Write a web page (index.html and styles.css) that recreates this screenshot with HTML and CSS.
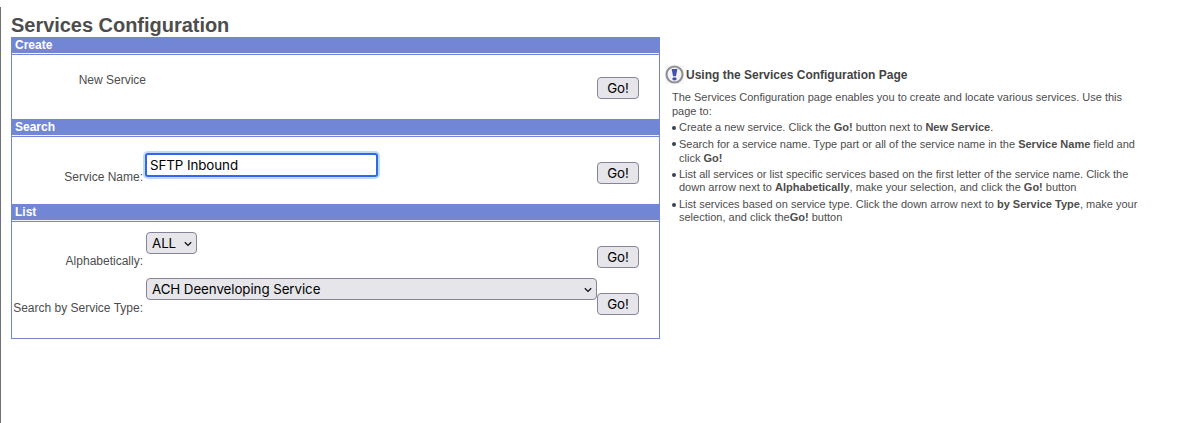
FILE: index.html
```html
<!DOCTYPE html>
<html lang="en">
<head>
<meta charset="utf-8">
<title>Services Configuration</title>
<link rel="stylesheet" href="styles.css">
</head>
<body>
<div class="page">
  <main class="main">
    <h1 class="title"><span>Services Configuration</span></h1>
    <div class="panel">
      <h2 class="bar"><span>Create</span></h2>
      <div class="section create">
        <div class="row">
          <span class="label new"><span>New Service</span></span>
          <span class="control"></span>
          <button class="go">Go!</button>
        </div>
      </div>
      <h2 class="bar"><span>Search</span></h2>
      <div class="section search">
        <div class="row">
          <label class="label" for="name"><span>Service Name:</span></label>
          <span class="control"><input class="field" id="name" type="text" value="SFTP Inbound"></span>
          <button class="go">Go!</button>
        </div>
      </div>
      <h2 class="bar"><span>List</span></h2>
      <div class="section list">
        <div class="row alpha">
          <label class="label" for="letter"><span>Alphabetically:</span></label>
          <span class="control"><span class="select small"><select id="letter"><option>ALL</option></select><svg class="chevron" viewBox="0 0 8 6"><path d="M.8 1.2 4 4.4 7.2 1.2"/></svg></span></span>
          <button class="go">Go!</button>
        </div>
        <div class="row type">
          <label class="label" for="type"><span>Search by Service Type:</span></label>
          <span class="control"><span class="select wide"><select id="type"><option>ACH Deenveloping Service</option></select><svg class="chevron" viewBox="0 0 8 6"><path d="M.8 1.2 4 4.4 7.2 1.2"/></svg></span></span>
          <button class="go">Go!</button>
        </div>
      </div>
    </div>
  </main>
  <aside class="help">
    <div class="help-head">
      <svg class="info" viewBox="0 0 20 20"><rect x="0" y="0" width="19" height="19" fill="#f6f6f8"/><circle cx="9.5" cy="9.5" r="8" fill="#f4f4f8" stroke="#939397" stroke-width="2.2"/><path d="M6.6 4h5.8l-1.5 7.2H8.1z" fill="#4350ad"/><ellipse cx="9.5" cy="13.8" rx="2.2" ry="1.6" fill="#4350ad"/></svg>
      <h2 class="help-title">Using the Services Configuration Page</h2>
    </div>
    <p class="intro">The Services Configuration page enables you to create and locate various services. Use this<br>page to:</p>
    <ul class="tips">
      <li>Create a new service. Click the <b>Go!</b> button next to <b>New Service</b>.</li>
      <li class="loose">Search for a service name. Type part or all of the service name in the <b>Service Name</b> field and<br>click <b>Go!</b></li>
      <li>List all services or list specific services based on the first letter of the service name. Click the<br>down arrow next to <b>Alphabetically</b>, make your selection, and click the <b>Go!</b> button</li>
      <li>List services based on service type. Click the down arrow next to <b>by Service Type</b>, make your<br>selection, and click the<b>Go!</b> button</li>
    </ul>
  </aside>
</div>
</body>
</html>
```
FILE: styles.css
```css
* { box-sizing: border-box; }
body {
  margin: 0;
  padding-top: 7px;
  background: #fff;
  color: #4d4d4d;
  font-family: "Liberation Sans", Arial, sans-serif;
  overflow: hidden;
}
.page {
  display: flex;
  height: 416px;
  padding-left: 10px;
  border-left: 1px solid #707070;
}
.main { width: 649px; }
h1, h2, p, ul { margin: 0; padding: 0; }
.title {
  height: 30px;
  padding-top: 6px;
  font-size: 20px;
  line-height: 24px;
  letter-spacing: -0.03px;
  white-space: nowrap;
}
.panel {
  height: 302px;
  border: 1px solid #7186d4;
}
.bar {
  height: 17px;
  padding-left: 3px;
  border-bottom: 1px solid #7186d4;
  background: linear-gradient(#7186d4 15px, #f2f4fc 15px);
  color: #fff;
  font-size: 12px;
  line-height: 14px;
}
.section + .bar {
  height: 18px;
  background: linear-gradient(#7186d4 16px, #f2f4fc 16px);
  line-height: 16px;
}
.create { height: 64px; padding-top: 17px; }
.search { height: 67px; padding-top: 16px; }
.list { height: 116px; padding-top: 10px; }
.row {
  display: grid;
  grid-template-columns: 134px 451px 42px;
  align-items: start;
}
.label {
  padding-right: 3px;
  font-size: 12px;
  line-height: 14px;
  text-align: right;
  white-space: nowrap;
}
.label.new { margin-top: 1px; padding-right: 0; }
.create .go { margin-top: 5px; }
.search .label { margin-top: 17px; }
.search .go { margin-top: 9px; }
.alpha { height: 46px; }
.list .label { margin-top: 22px; }
.alpha .go { margin-top: 14px; }
.type .label { margin-top: 23px; }
.type .go { margin-top: 15px; }
.go, .field, select {
  border: 1px solid #85859a;
  border-radius: 4px;
  background: #e6e6ea;
  color: #000;
  font: 13.33px Inter, sans-serif;
  letter-spacing: -0.07px;
}
.go {
  width: 42px;
  height: 22px;
  padding: 0;
}
.control { display: flex; }
.field {
  width: 233px;
  height: 24px;
  margin-left: -1px;
  padding: 0 3px;
  border: 2px solid #3067f0;
  border-radius: 3px;
  outline: none;
  background: #fff;
  box-shadow: 0 0 0 2px #bddcfb;
}
.select { position: relative; display: flex; height: 22px; }
.small { width: 51px; }
.wide { width: 451px; }
select {
  width: 100%;
  height: 22px;
  padding: 0 5px;
  appearance: none;
}
.chevron {
  position: absolute;
  top: 9px;
  right: 5.5px;
  width: 8px;
  height: 6px;
  fill: none;
  stroke: #111;
  stroke-width: 1.3;
}
.help { padding: 58px 0 0 5px; white-space: nowrap; }
.help-head { display: flex; height: 19px; }
.info { width: 20px; height: 20px; }
.help-title {
  padding-left: 1px;
  font-size: 12px;
  line-height: 20px;
  color: #444;
}
.intro {
  padding: 6px 0 0 7px;
  font-size: 11px;
  line-height: 14px;
}
.tips {
  display: grid;
  gap: 3px;
  padding: 3px 0 0 7px;
  list-style: none;
  font-size: 11px;
  line-height: 13.5px;
}
.tips li { position: relative; padding-left: 7px; }
.tips .loose { height: 28px; margin-top: -1px; line-height: 14px; }
.tips li::before {
  content: "";
  position: absolute;
  left: 0;
  top: 5px;
  width: 4px;
  height: 4px;
  border-radius: 50%;
  background: #39424e;
}
```
